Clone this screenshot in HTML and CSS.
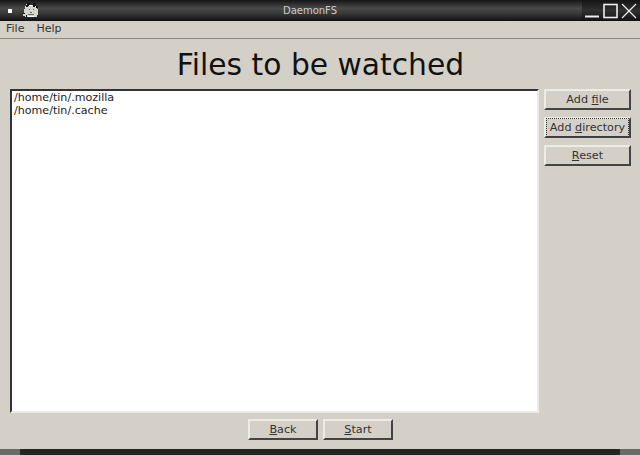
FILE: index.html
```html
<!DOCTYPE html>
<html lang="en">
<head>
<meta charset="utf-8">
<title>DaemonFS</title>
<link rel="stylesheet" href="styles.css">
</head>
<body>
<div class="window">
  <header class="titlebar">
    <span class="sysmenu"></span>
    <svg class="appicon" width="16" height="15" viewBox="0 0 16 15" shape-rendering="crispEdges">
      <path d="M3 1h2v1h1v1h3v-1h2v-1h2v2h1v3h1v6h-1v2H2v-1H0v-3h1V6h1V3h1z" fill="#d6d6ce"/>
      <path d="M4 0h3v3H5v1H3V2h1z M10 0h3v3h-1v1h-2z M0 10h2v1H0z M13 3h2v2h-2z M3 12h1v2H3z" fill="#151515"/>
      <path d="M6 6h1v1H6z M10 6h1v1h-1z M7 9h2v1H7z M5 11h6v1H5z" fill="#666"/>
      <path d="M2 4h1v1H2z M6 2h3v1H6z M5 13h6v1H5z" fill="#fff"/>
    </svg>
    <span class="wintitle">DaemonFS</span>
    <div class="winbtns">
      <svg width="58" height="21" viewBox="0 0 58 21" fill="none" stroke="#eee" stroke-width="1.2">
        <path d="M3 16.5H17" stroke-width="2"/>
        <rect x="22" y="4.5" width="13" height="13" stroke-width="1.6"/>
        <path d="M40 4L54 18M54 4L40 18"/>
      </svg>
    </div>
  </header>
  <nav class="menubar"><span class="menu">File</span><span class="menu">Help</span></nav>
  <main class="content">
    <h1 class="heading">Files to be watched</h1>
    <div class="middle">
      <div class="listbox">
        <div>/home/tin/.mozilla</div>
        <div>/home/tin/.cache</div>
      </div>
      <div class="side">
        <button class="btn side-btn"><span>Add <u>f</u>ile</span></button>
        <button class="btn side-btn"><span class="focus">Add <u>d</u>irectory</span></button>
        <button class="btn side-btn"><span><u>R</u>eset</span></button>
      </div>
    </div>
    <div class="bottom">
      <button class="btn nav-btn"><span><u>B</u>ack</span></button>
      <button class="btn nav-btn"><span><u>S</u>tart</span></button>
    </div>
  </main>
  <footer class="statusbar"><span class="grip"></span><span class="fill"></span><span class="grip"></span></footer>
</div>
</body>
</html>
```
FILE: styles.css
```css
* { box-sizing: border-box; }
html, body { margin: 0; padding: 0; }
body { width: 640px; height: 455px; overflow: hidden; font-family: "DejaVu Sans", sans-serif; font-size: 11px; color: #111; background: #d4d0c8; }
.window { display: flex; flex-direction: column; height: 455px; }
.titlebar { height: 21px; flex: none; display: flex; align-items: center; position: relative; padding-left: 8px; background: linear-gradient(#161616, #4a4a4a 40%, #383838 65%, #111); color: #ddd; }
.sysmenu { width: 4px; height: 4px; background: #fff; margin-right: 11px; }
.appicon { flex: none; }
.wintitle { position: absolute; left: 0; width: 620px; text-align: center; font-size: 10px; color: #ccc; }
.winbtns { position: absolute; right: 0; top: 0; background: linear-gradient(#141414, #303030 50%, #111); }
.winbtns svg { display: block; }
.menubar { height: 18px; flex: none; display: flex; align-items: center; gap: 12px; padding: 0 6px 2px; border-bottom: 1px solid #8a8880; background: #d4d0c8; font-size: 11px; color: #333; }
.content { flex: 1; display: flex; flex-direction: column; padding: 0 9px 0 10px; background: #d4d0c8; }
.heading { margin: 6px 0 5px; height: 39px; line-height: 39px; text-align: center; font-size: 29.75px; font-weight: normal; color: #111; }
.middle { display: flex; gap: 5px; flex: none; height: 324px; }
.listbox { width: 529px; flex: none; background: #fff; border: 2px solid; border-color: #333 #eceae4 #eceae4 #333; padding: 0 2px; font-size: 11.1px; line-height: 13px; color: #222; }
.side { display: flex; flex-direction: column; gap: 7px; width: 87px; }
.btn { font: inherit; font-size: 11.2px; color: #333; background: #d4d0c8; border: 2px solid; border-color: #eeece6 #444 #444 #eeece6; padding: 0; height: 21px; display: flex; align-items: center; justify-content: center; }
.side-btn { width: 87px; }
.focus { outline: 1px dotted #333; padding: 2px 0; width: 81px; white-space: nowrap; }
.bottom { display: flex; justify-content: center; gap: 5px; margin-top: 6px; height: 21px; }
.nav-btn { width: 70px; }
.statusbar { height: 6px; margin-top: 9px; flex: none; display: flex; background: #252525; }
.grip { width: 20px; background: #6a6a6a; }
.fill { flex: 1; }
```
